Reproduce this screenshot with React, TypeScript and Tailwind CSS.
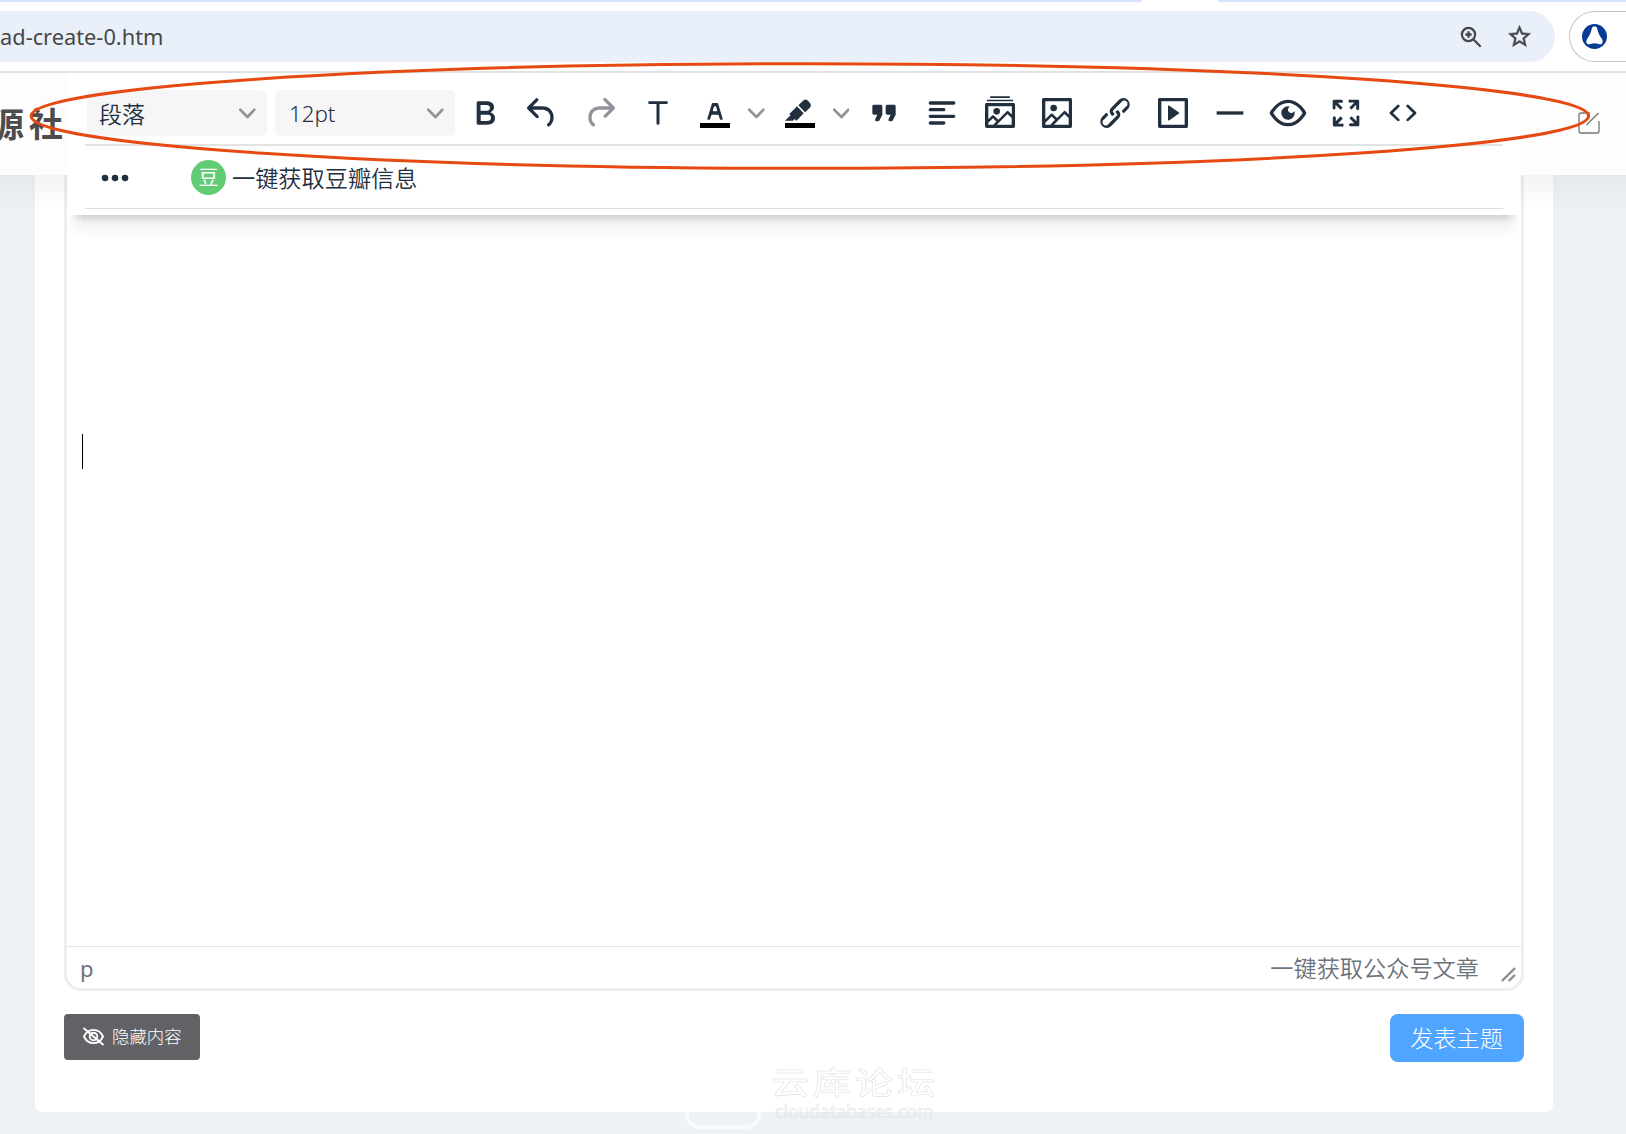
import React from "react";

const SANS = "font-['Noto_Sans','Noto_Sans_CJK_SC',sans-serif]";
const CJK = "font-['Noto_Sans_CJK_SC',sans-serif]";

const PATHS = {
  bold: "M7.8 19c-.3 0-.5 0-.6-.2l-.2-.5V5.7c0-.2 0-.4.2-.5l.6-.2h5c1.5 0 2.7.3 3.5 1 .7.6 1.1 1.4 1.1 2.5a3 3 0 0 1-.6 1.9c-.4.6-1 1-1.6 1.2.4.1.9.3 1.3.6s.8.7 1 1.2c.4.4.5 1 .5 1.6 0 1.3-.4 2.3-1.3 3-.8.7-2.1 1-3.8 1H7.8Zm5-8.3c.6 0 1.2-.1 1.6-.5.4-.3.6-.7.6-1.3 0-1.1-.8-1.7-2.3-1.7H9.3v3.5h3.4Zm.5 6c.7 0 1.3-.1 1.7-.4.4-.4.6-.9.6-1.5s-.2-1-.7-1.4c-.4-.3-1-.4-2-.4H9.4v3.8h4Z",
  undo: "M6.4 8H12c3.7 0 6.2 2 6.8 5.1.6 2.7-.4 5.6-2.3 6.8a1 1 0 0 1-1-1.8c1.1-.6 1.8-2.7 1.4-4.6-.5-2.1-2.1-3.5-4.9-3.5H6.4l3.3 3.3a1 1 0 1 1-1.4 1.4l-5-5a1 1 0 0 1 0-1.4l5-5a1 1 0 0 1 1.4 1.4L6.4 8Z",
  redo: "M17.6 10H12c-2.8 0-4.4 1.4-4.9 3.5-.4 2 .3 4 1.4 4.6a1 1 0 1 1-1 1.8c-2-1.2-2.9-4.1-2.3-6.8.6-3 3-5.1 6.8-5.1h5.6l-3.3-3.3a1 1 0 1 1 1.4-1.4l5 5a1 1 0 0 1 0 1.4l-5 5a1 1 0 0 1-1.4-1.4l3.3-3.3Z",
  text: "M6.9 5h10.2a.75.75 0 0 1 0 1.6h-4.2v11.5a.9.9 0 0 1-1.8 0V6.6H6.9a.75.75 0 0 1 0-1.6Z",
  color: "M8.7 16h-.8a.5.5 0 0 1-.5-.6l2.7-9c.1-.3.3-.4.5-.4h2.8c.2 0 .4.1.5.4l2.7 9a.5.5 0 0 1-.5.6h-.8a.5.5 0 0 1-.4-.4l-.7-2.2c0-.3-.3-.4-.5-.4h-3.4c-.2 0-.4.1-.5.4l-.7 2.2c0 .3-.2.4-.4.4Zm2.6-7.6-.6 2a.5.5 0 0 0 .5.6h1.6a.5.5 0 0 0 .5-.6l-.6-2c0-.3-.3-.4-.5-.4h-.4c-.2 0-.4.1-.5.4Z",
  highlight: "M7.7 16.7H3l3.3-3.3-.7-.8L10.2 8l4 4.1-4 4.2c-.2.2-.6.2-.8 0l-.6-.7-1.1 1.1zm5-7.5L11 7.4l3-2.9a2 2 0 0 1 2.6 0L18 6c.7.7.7 2 0 2.7l-2.9 2.9-1.8-1.8-.5-.6",
  quote: "M7.5 17h.9c.4 0 .7-.2.9-.6L11 13V8c0-.6-.4-1-1-1H6a1 1 0 0 0-1 1v4c0 .6.4 1 1 1h2l-1.3 2.7a1 1 0 0 0 .8 1.3Zm8 0h.9c.4 0 .7-.2.9-.6L19 13V8c0-.6-.4-1-1-1h-4a1 1 0 0 0-1 1v4c0 .6.4 1 1 1h2l-1.3 2.7a1 1 0 0 0 .8 1.3Z",
  align: "M5 5h14c.6 0 1 .4 1 1s-.4 1-1 1H5a1 1 0 1 1 0-2Zm0 4h8c.6 0 1 .4 1 1s-.4 1-1 1H5a1 1 0 1 1 0-2Zm0 8h8c.6 0 1 .4 1 1s-.4 1-1 1H5a1 1 0 0 1 0-2Zm0-4h14c.6 0 1 .4 1 1s-.4 1-1 1H5a1 1 0 0 1 0-2Z",
  gallery: "m5 15.7 2.3-2.2c.3-.3.7-.3 1 0L11 16l5.1-5c.3-.4.8-.4 1 0l2 1.9V8H5v7.7ZM5 18V19h3l1.8-1.9-2-2L5 17.9Zm14-3-2.5-2.4-6.4 6.5H19v-4ZM4 6h16c.6 0 1 .4 1 1v13c0 .6-.4 1-1 1H4a1 1 0 0 1-1-1V7c0-.6.4-1 1-1Zm6 7a2 2 0 1 1 0-4 2 2 0 0 1 0 4ZM4.5 4h15a.5.5 0 1 1 0 1h-15a.5.5 0 0 1 0-1Zm2-2h11a.5.5 0 1 1 0 1h-11a.5.5 0 0 1 0-1Z",
  image: "m5 15.7 3.3-3.2c.3-.3.7-.3 1 0L12 15l4.1-4c.3-.4.8-.4 1 0l2 1.9V5H5v10.7ZM5 18V19h3l2.8-2.9-2-2L5 17.9Zm14-3-2.5-2.4-6.4 6.5H19v-4ZM4 3h16c.6 0 1 .4 1 1v16c0 .6-.4 1-1 1H4a1 1 0 0 1-1-1V4c0-.6.4-1 1-1Zm6 8a2 2 0 1 0 0-4 2 2 0 0 0 0 4Z",
  link: "M6.2 12.3a1 1 0 0 1 1.4 1.4l-2 2a2 2 0 1 0 2.6 2.8l4.8-4.8a1 1 0 0 0 0-1.4 1 1 0 1 1 1.4-1.3 2.9 2.9 0 0 1 0 4L9.6 20a3.9 3.9 0 0 1-5.5-5.5l2-2Zm11.6-.6a1 1 0 0 1-1.4-1.4l2-2a2 2 0 1 0-2.6-2.8L11 10.3a1 1 0 0 0 0 1.4A1 1 0 1 1 9.6 13a2.9 2.9 0 0 1 0-4L14.4 4a3.9 3.9 0 0 1 5.5 5.5l-2 2Z",
  embed: "M4 3h16c.6 0 1 .4 1 1v16c0 .6-.4 1-1 1H4a1 1 0 0 1-1-1V4c0-.6.4-1 1-1Zm1 2v14h14V5H5Zm4.8 2.6 5.6 4a.5.5 0 0 1 0 .8l-5.6 4A.5.5 0 0 1 9 16V8a.5.5 0 0 1 .8-.4Z",
  rule: "M4 11h16v2H4z",
  preview: "M3.5 12.5c.5.8 1.1 1.6 1.8 2.3 2 2 4.2 3.2 6.7 3.2s4.7-1.2 6.7-3.2a16.2 16.2 0 0 0 2.1-2.8 15.7 15.7 0 0 0-2.1-2.8c-2-2-4.2-3.2-6.7-3.2a9.3 9.3 0 0 0-6.7 3.2A16.2 16.2 0 0 0 3.2 12c0 .2.2.3.3.5Zm-2.4-1 .7-1.2L4 7.8C6.2 5.4 8.9 4 12 4c3 0 5.8 1.4 8.1 3.8a18.2 18.2 0 0 1 2.8 3.7v1l-.7 1.2-2.1 2.5c-2.3 2.4-5 3.8-8.1 3.8-3 0-5.8-1.4-8.1-3.8a18.2 18.2 0 0 1-2.8-3.7 1 1 0 0 1 0-1Zm12-3.3a2 2 0 1 0 2.7 2.6 4 4 0 1 1-2.6-2.6Z",
  fullscreen: "m15.3 10-1.2-1.3 2.9-3h-2.3a.9.9 0 1 1 0-1.7H19c.5 0 .9.4.9.9v4.4a.9.9 0 1 1-1.8 0V7l-2.9 3Zm0 4 3 3v-2.3a.9.9 0 1 1 1.7 0V19c0 .5-.4.9-.9.9h-4.4a.9.9 0 1 1 0-1.8H17l-3-2.9 1.3-1.2ZM10 15.4l-2.9 3h2.3a.9.9 0 1 1 0 1.7H5a.9.9 0 0 1-.9-.9v-4.4a.9.9 0 1 1 1.8 0V17l2.9-3 1.2 1.3ZM8.7 10 5.7 7v2.3a.9.9 0 0 1-1.7 0V5c0-.5.4-.9.9-.9h4.4a.9.9 0 0 1 0 1.8H7l3 2.9-1.3 1.2Z",
  code: "M9.8 15.7c.3.3.3.8 0 1-.3.4-.9.4-1.2 0l-4.4-4.1a.8.8 0 0 1 0-1.2l4.4-4.2c.3-.3.9-.3 1.2 0 .3.3.3.8 0 1.1L6 12l3.8 3.7ZM14.2 15.7c-.3.3-.3.8 0 1 .4.4.9.4 1.2 0l4.4-4.1c.3-.3.3-.9 0-1.2l-4.4-4.2a.8.8 0 0 0-1.2 0c-.3.3-.3.8 0 1.1L18 12l-3.8 3.7Z",
  more: "M6 10a2 2 0 0 0-2 2c0 1.1.9 2 2 2a2 2 0 0 0 2-2 2 2 0 0 0-2-2Zm12 0a2 2 0 0 0-2 2c0 1.1.9 2 2 2a2 2 0 0 0 2-2 2 2 0 0 0-2-2Zm-6 0a2 2 0 0 0-2 2c0 1.1.9 2 2 2a2 2 0 0 0 2-2 2 2 0 0 0-2-2Z",
};

type IconName = keyof typeof PATHS;

function Icon({ name, bar }: { name: IconName; bar?: boolean }) {
  return (
    <svg viewBox="0 0 24 24" className="size-10 shrink-0" fill="currentColor" fillRule="evenodd">
      <path d={PATHS[name]} />
      {bar && <path d="M3 18h18v3H3z" fill="#000" />}
    </svg>
  );
}

function Chevron() {
  return (
    <svg viewBox="0 0 10 10" className="size-[16.7px] shrink-0 text-[#909399]" fill="currentColor">
      <path d="M8.7 2.2c.3-.3.8-.3 1 0 .4.4.4.9 0 1.2L5.7 7.8c-.3.3-.9.3-1.2 0L.2 3.4a.8.8 0 0 1 0-1.2c.3-.3.8-.3 1.1 0L5 6l3.7-3.8Z" />
    </svg>
  );
}

const TOOLS: { name: IconName; split?: boolean; dim?: boolean }[] = [
  { name: "bold" },
  { name: "undo" },
  { name: "redo", dim: true },
  { name: "text" },
  { name: "color", split: true },
  { name: "highlight", split: true },
  { name: "quote" },
  { name: "align" },
  { name: "gallery" },
  { name: "image" },
  { name: "link" },
  { name: "embed" },
  { name: "rule" },
  { name: "preview" },
  { name: "fullscreen" },
  { name: "code" },
];

function SelectBox({ label, latin }: { label: string; latin?: boolean }) {
  return (
    <button className={`flex h-[46px] w-[180px] items-center justify-between rounded-[5px] bg-[#f6f6f6] pr-[11px] text-[#222f3e] ${latin ? "pl-[14px]" : "pl-[12px]"}`}>
      <span className={latin ? `${SANS} pt-[2px] text-[22.3px] font-[350]` : `${CJK} text-[23px] font-[350]`}>{label}</span>
      <Chevron />
    </button>
  );
}

function BrowserBar() {
  return (
    <div className="flex h-[73px] flex-col border-b-2 border-[#e0e2e3] bg-white">
      <div className="flex h-[2px] justify-between">
        <div className="w-[1142px] rounded-br-[3px] bg-[#d3e3fd]" />
        <div className="w-[408px] rounded-bl-[3px] bg-[#d3e3fd]" />
      </div>
      <div className="mt-[9px] flex h-[51px] justify-between">
        <div className="flex w-[1555px] items-center justify-between rounded-r-full bg-[#eaf0f9] pr-[22px]">
          <span className={`${SANS} text-[21.8px] leading-[30px] text-[#474747]`}>ad-create-0.htm</span>
          <div className="flex items-center gap-[23px] text-[#474747]">
            <svg viewBox="0 0 24 24" className="size-[24px]" fill="none" stroke="currentColor" strokeWidth="2.3">
              <circle cx="9.5" cy="9.5" r="6.6" />
              <path d="m14.3 14.3 7.4 7.4M9.5 6.3v6.4M6.3 9.5h6.4" />
            </svg>
            <svg viewBox="0 0 24 24" className="size-[27px]" fill="currentColor">
              <path d="m22 9.24-7.19-.62L12 2 9.19 8.63 2 9.24l5.46 4.73L5.82 21 12 17.27 18.18 21l-1.63-7.03L22 9.24zM12 15.4l-3.76 2.27 1-4.28-3.32-2.88 4.38-.38L12 6.1l1.71 4.04 4.38.38-3.32 2.88 1 4.28L12 15.4z" stroke="currentColor" strokeWidth=".4" />
            </svg>
          </div>
        </div>
        <div className="flex w-[57px] items-center rounded-l-full border border-r-0 border-[#c4c4c4] pl-[12px]">
          <svg viewBox="0 0 24 24" className="size-[25px]">
            <circle cx="12" cy="12" r="12" fill="#073a93" />
            <path d="M9.3 4.8c.5-1.8 1-2.3 2.7-2.3s2.2.5 2.7 2.3c1 4.5 2.2 6.5 4.6 9.8.9 1.4.7 3.4-.3 4.4-.9.8-2 .4-3.2.1-2.6-.7-5-.7-7.6 0-1.2.3-2.3.7-3.2-.1-1-1-1.2-3-.3-4.4C7.1 11.3 8.3 9.3 9.3 4.8Z" fill="#fff" />
          </svg>
        </div>
      </div>
    </div>
  );
}

function SiteHeader() {
  return (
    <header className="absolute inset-x-0 top-0 flex h-[102px] items-center justify-between overflow-hidden bg-[#fdfdfd]">
      <span className={`${CJK} mb-[3px] -ml-[10px] text-[34px] leading-none font-bold tracking-[5px] text-[#4c4c4c]`}>源社</span>
      <svg viewBox="0 0 22 22" className="mr-[26px] mb-[2px] size-[22px]" fill="none" stroke="#777" strokeWidth="1.3">
        <path d="M12 1H3a2 2 0 0 0-2 2v16a2 2 0 0 0 2 2h16a2 2 0 0 0 2-2V9M8.5 13 20.5 1" />
      </svg>
    </header>
  );
}

function Toolbar() {
  return (
    <div className="absolute top-0 left-[68px] flex h-[142px] w-[1452px] flex-col bg-white px-[17px] pt-[17px] text-[#222f3e]">
      <div className="flex h-[56px] border-b-2 border-[#e3e3e3] pl-[2px]">
        <div className="flex gap-[8px]">
          <SelectBox label="段落" />
          <SelectBox label="12pt" latin />
        </div>
        <div className="flex h-[46px] items-center pl-[0.7px]">
          {TOOLS.map((t) => (
            <div key={t.name} className={t.dim ? "flex items-center text-[#909399]" : "flex items-center"}>
              <div className="flex w-[57.7px] justify-center">
                <Icon name={t.name} bar={t.split} />
              </div>
              {t.split && (
                <div className="flex w-[26.8px] items-center pl-[4px]">
                  <Chevron />
                </div>
              )}
            </div>
          ))}
        </div>
      </div>
      <div className="flex h-[63px] items-center border-b border-[#e0e0e0]">
        <div className="mt-[2px] ml-[10px] flex w-[96px]">
          <Icon name="more" />
        </div>
        <span className={`${CJK} flex size-[35px] items-center justify-center rounded-full bg-[#62cc74] text-[20px] leading-none text-white`}>豆</span>
        <span className={`${CJK} mt-[2px] ml-[6px] text-[23.2px] leading-none font-[350]`}>一键获取豆瓣信息</span>
      </div>
    </div>
  );
}

function Watermark() {
  return (
    <div className="absolute top-[988px] left-[685px] flex gap-[10px]">
      <div className="mt-[4px] h-[64px] w-[76px] rounded-[14px] border-[4px] border-white/60" />
      <div className="flex flex-col text-transparent">
        <span className={`${CJK} origin-center scale-y-80 text-[38px] leading-[40px] font-medium tracking-[4px] [-webkit-text-stroke:0.7px_#e2e0e0]`}>云库论坛</span>
        <span className={`${SANS} ml-[4px] text-[17.5px] leading-[20px] [-webkit-text-stroke:0.5px_#e0e2e4]`}>cloudatabases.com</span>
      </div>
    </div>
  );
}

export default function App() {
  return (
    <div className="relative h-[1134px] w-[1626px] overflow-hidden bg-[#edf2f5]">
      <BrowserBar />
      <main className="relative h-[1061px]">
        <section className="ml-[35px] flex h-[1039px] w-[1518px] flex-col rounded-b-[7px] bg-white px-[29px]">
          <div className="flex h-[918px] flex-col rounded-b-[17px] border-3 border-t-0 border-[#eee]">
            <div className="flex-1 px-[15px] pt-[361px]">
              <div className="h-[35px] w-px bg-black" />
            </div>
            <div className="flex h-[42px] items-center border-t border-[#e3e3e3] pr-[4px] pl-[13px] text-[#6b737c]">
              <span className={`${SANS} text-[22px] leading-none`}>p</span>
              <span className={`${CJK} mt-[1px] ml-auto text-[23.2px] leading-none font-[350]`}>一键获取公众号文章</span>
              <svg viewBox="0 0 10 10" className="mt-[14px] ml-[21px] size-[17px]" fill="#909399">
                <path d="M8.1 1.1A.5.5 0 1 1 9 2l-7 7A.5.5 0 1 1 1 8l7-7ZM8.1 5.1A.5.5 0 1 1 9 6l-3 3A.5.5 0 1 1 5 8l3-3Z" />
              </svg>
            </div>
          </div>
          <div className="mt-[23px] flex items-start justify-between">
            <button className="flex h-[46px] w-[136px] items-center gap-[7px] rounded-[4px] bg-[#606266] pb-[1px] pl-[18px] text-white">
              <svg viewBox="0 0 24 20" className="h-[19px] w-[23px]" fill="none" stroke="#fff" strokeWidth="2">
                <path d="M2 10c2-4.500 5.800-7 10-7s8 2.500 10 7c-2 4.500-5.800 7-10 7S4 14.500 2 10Z" />
                <circle cx="12" cy="10" r="4" />
                <path d="m1.500 1 21 18" />
              </svg>
              <span className={`${CJK} text-[17.4px] font-light`}>隐藏内容</span>
            </button>
            <button className={`${CJK} flex h-[48px] w-[134px] items-center justify-center rounded-[8px] bg-[#4fa5ff] pr-px pb-[1px] text-[23.2px] font-light text-white`}>发表主题</button>
          </div>
        </section>
        <div className="absolute inset-x-0 top-[102px] h-[36px] bg-linear-to-b from-[#78788c]/8 to-transparent" />
        <div className="absolute top-[142px] left-[68px] h-[24px] w-[1452px] bg-linear-to-b from-black/17 via-black/5 via-35% to-transparent mask-x-from-[99%]" />
        <SiteHeader />
        <Toolbar />
        <Watermark />
      </main>
      <svg className="pointer-events-none absolute inset-0 size-full" fill="none">
        <ellipse cx="809.8" cy="116" rx="778.8" ry="52.3" stroke="#e64a12" strokeWidth="3" />
      </svg>
    </div>
  );
}
